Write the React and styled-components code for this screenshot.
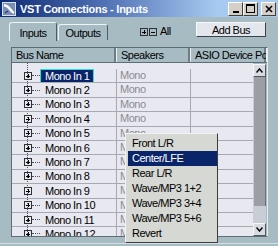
import styled, { createGlobalStyle } from 'styled-components';

const GlobalStyle = createGlobalStyle`
    html, body {
        margin: 0;
        padding: 0;
        background: #a7bbc3;
    }
    body {
        font-family: "Liberation Sans", Arial, sans-serif;
        font-size: 11px;
        letter-spacing: -0.5px;
        color: #000;
    }
`;

const Window = styled.div`
    position: relative;
    width: 278px;
    height: 246px;
    overflow: hidden;
    display: flex;
    flex-direction: column;
    background: #a7bbc3;
`;

const TitleBar = styled.div`
    height: 17px;
    display: flex;
    align-items: center;
    padding: 0 2px;
    background: linear-gradient(to right, #0c2a72 0%, #5576b8 40%, #a6caf0 78%, #a6caf0 100%);
`;

const Title = styled.span`
    margin-left: 4px;
    font-weight: bold;
    font-size: 11px;
    letter-spacing: -0.25px;
    color: #fff;
    white-space: nowrap;
`;

const CaptionButtons = styled.div`
    margin-left: auto;
    display: flex;
`;

const CaptionButton = styled.div`
    width: 15px;
    height: 14px;
    box-sizing: border-box;
    margin-left: ${({ $gap }) => $gap || 0}px;
    background: #d4d0c8;
    border: 1px solid;
    border-color: #fff #404040 #404040 #fff;
    display: flex;
    align-items: center;
    justify-content: center;
`;

const Toolbar = styled.div`
    height: 24px;
    display: flex;
    align-items: flex-end;
    padding: 0 0 0 9px;
    box-sizing: border-box;
`;

const Tab = styled.div`
    width: ${({ $w }) => $w}px;
    height: ${({ $active }) => ($active ? 19 : 16)}px;
    box-sizing: border-box;
    border: 1px solid;
    border-bottom: none;
    border-color: #eef4f6 #4e5c64 transparent #eef4f6;
    border-radius: 3px 3px 0 0;
    margin-right: ${({ $active }) => ($active ? 1 : 0)}px;
    margin-bottom: ${({ $active }) => ($active ? 0 : 1)}px;
    display: flex;
    align-items: center;
    justify-content: center;
    padding-top: 1px;
`;

const ExpandAll = styled.div`
    align-self: flex-start;
    margin: 10px 0 0 32px;
    display: flex;
    align-items: center;
    gap: 1px;
    height: 9px;
`;

const AllLabel = styled.span`
    margin-left: 2px;
    line-height: 9px;
`;

const AddBus = styled.div`
    align-self: flex-start;
    margin: 5px 12px 0 auto;
    width: 70px;
    height: 15px;
    box-sizing: border-box;
    background: #e4e6ee;
    border: 1px solid;
    border-color: #f8f8fc #404048 #404048 #f8f8fc;
    display: flex;
    align-items: center;
    justify-content: center;
`;

const Frame = styled.div`
    margin: 6px 10px 0 11px;
    height: 190px;
    box-sizing: border-box;
    border: 1px solid #5e6c74;
    border-right-color: #e4ecf0;
    display: flex;
    flex-direction: column;
`;

const Footer = styled.div`
    margin-top: 6px;
    border-top: 1px solid #d4e0e4;
    flex: 1;
`;

const HeaderRow = styled.div`
    height: 15px;
    box-sizing: border-box;
    display: grid;
    grid-template-columns: 105px 74px 1fr;
    border-bottom: 1px solid #5e6c74;
    background: #a7bbc3;
`;

const HeaderCell = styled.div`
    padding-left: 4px;
    line-height: 14px;
    white-space: nowrap;
    overflow: hidden;
    border-right: 1px solid #e8f0f2;
    box-shadow: inset -2px 0 0 #6e7c84;
`;

const Body = styled.div`
    flex: 1;
    display: flex;
    min-height: 0;
`;

const List = styled.div`
    width: 241px;
    padding-top: 6px;
    overflow: hidden;
    background-color: #e8e8f0;
    background-image: repeating-linear-gradient(to bottom, #505058 0 1px, transparent 1px 2px);
    background-size: 1px 100%;
    background-position: 15px 0;
    background-repeat: no-repeat;
`;

const Row = styled.div`
    height: 14.4px;
    box-sizing: border-box;
    display: grid;
    grid-template-columns: 105px 74px 1fr;
    border-bottom: 1px solid #a6a8b2;
`;

const NameCell = styled.div`
    display: flex;
    align-items: center;
    padding-left: 12px;
    border-right: 1px solid #a6a8b2;
    white-space: nowrap;
    overflow: hidden;
`;

const Connector = styled.span`
    width: 8px;
    height: 0;
    border-top: 1px dotted ${({ $hidden }) => ($hidden ? 'transparent' : '#505058')};
`;

const BusLabel = styled.span`
    padding: 0 4px;
    height: 14px;
    box-sizing: border-box;
    line-height: 12px;
    border: 1px solid ${({ $selected }) => ($selected ? '#22e4d4' : 'transparent')};
    background: ${({ $selected }) => ($selected ? '#0a246a' : 'transparent')};
    color: ${({ $selected }) => ($selected ? '#fff' : '#000')};
`;

const SpeakerCell = styled.div`
    padding-left: 3px;
    line-height: 13px;
    color: #8a8c94;
    border-right: 1px solid #a6a8b2;
`;

const Scrollbar = styled.div`
    width: 13px;
    display: flex;
    flex-direction: column;
    padding-top: 1px;
    background: #a7bbc3;
`;

const ScrollButton = styled.div`
    height: 13px;
    box-sizing: border-box;
    background: #d8dce2;
    border: 1px solid;
    border-color: #f4f6f8 #505860 #505860 #f4f6f8;
    display: flex;
    align-items: center;
    justify-content: center;
`;

const Thumb = styled.div`
    height: 129px;
    box-sizing: border-box;
    background: #9c9ea6;
    border-left: 1px solid #c8ccd2;
    border-right: 1px solid #6c7078;
`;

const Track = styled.div`
    flex: 1;
    background: #c9ced6;
`;

const Menu = styled.div`
    position: absolute;
    left: 125px;
    top: 133px;
    width: 93px;
    height: 110px;
    box-sizing: border-box;
    padding: 2px 0 1px 2px;
    background: #d6d8d4;
    border: 1px solid;
    border-color: #f2f2f0 #3c3c3c #3c3c3c #f2f2f0;
`;

const MenuItem = styled.div`
    height: 15px;
    padding-left: 4px;
    line-height: 15px;
    white-space: nowrap;
    background: ${({ $active }) => ($active ? '#0a246a' : 'transparent')};
    color: ${({ $active }) => ($active ? '#fff' : '#000')};
`;

const AppIcon = () => (
    <svg width="14" height="14" viewBox="0 0 14 14">
        <rect x="0" y="0" width="14" height="14" fill="#7890b8" />
        <rect x="0.5" y="0.5" width="13" height="13" fill="none" stroke="#d8e0f0" />
        <path d="M2 3 Q6 4 8 7 Q10 10 12 11" stroke="#fff" strokeWidth="2.4" fill="none" />
        <path d="M3 11 L6 9" stroke="#30406a" strokeWidth="1.5" />
    </svg>
);

const BoxIcon = ({ minus }) => (
    <svg width="8" height="8" viewBox="0 0 8 8" shapeRendering="crispEdges">
        <rect x="0.5" y="0.5" width="7" height="7" fill="none" stroke="#303038" />
        <path d="M2 4.5 H6" stroke="#000" />
        {!minus && <path d="M4.5 2 V6" stroke="#000" />}
    </svg>
);

const rows = Array.from({ length: 12 }, (_, i) => i + 1);
const menuItems = [
    'Front L/R',
    'Center/LFE',
    'Rear L/R',
    'Wave/MP3 1+2',
    'Wave/MP3 3+4',
    'Wave/MP3 5+6',
    'Revert'
];

const App = () => {
    return (
        <>
            <GlobalStyle />
            <Window>
                <TitleBar>
                    <AppIcon />
                    <Title>VST Connections - Inputs</Title>
                    <CaptionButtons>
                        <CaptionButton>
                            <svg width="8" height="8" viewBox="0 0 8 8">
                                <rect x="1" y="6" width="6" height="2" fill="#000" />
                            </svg>
                        </CaptionButton>
                        <CaptionButton>
                            <svg width="9" height="9" viewBox="0 0 9 9" shapeRendering="crispEdges">
                                <rect x="0.5" y="0.5" width="8" height="8" fill="none" stroke="#000" />
                                <rect x="0" y="0" width="9" height="2" fill="#000" />
                            </svg>
                        </CaptionButton>
                        <CaptionButton $gap={3}>
                            <svg width="8" height="8" viewBox="0 0 8 8">
                                <path d="M1 1 L7 7 M7 1 L1 7" stroke="#000" strokeWidth="1.6" />
                            </svg>
                        </CaptionButton>
                    </CaptionButtons>
                </TitleBar>

                <Toolbar>
                    <Tab $active $w={48}>Inputs</Tab>
                    <Tab $w={50}>Outputs</Tab>
                    <ExpandAll>
                        <BoxIcon />
                        <BoxIcon minus />
                        <AllLabel>All</AllLabel>
                    </ExpandAll>
                    <AddBus>Add Bus</AddBus>
                </Toolbar>

                <Frame>
                    <HeaderRow>
                        <HeaderCell>Bus Name</HeaderCell>
                        <HeaderCell>Speakers</HeaderCell>
                        <HeaderCell>ASIO Device Port</HeaderCell>
                    </HeaderRow>
                    <Body>
                        <List>
                            {rows.map((n) => (
                                <Row key={n}>
                                    <NameCell>
                                        <BoxIcon />
                                        <Connector $hidden={n === 9} />
                                        <BusLabel $selected={n === 1}>Mono In {n}</BusLabel>
                                    </NameCell>
                                    <SpeakerCell>Mono</SpeakerCell>
                                    <div />
                                </Row>
                            ))}
                        </List>
                        <Scrollbar>
                            <ScrollButton>
                                <svg width="7" height="5" viewBox="0 0 7 5">
                                    <path d="M0.5 4.5 L3.5 1 L6.5 4.5" stroke="#000" strokeWidth="1.4" fill="none" />
                                </svg>
                            </ScrollButton>
                            <Thumb />
                            <Track />
                            <ScrollButton>
                                <svg width="7" height="5" viewBox="0 0 7 5">
                                    <path d="M0.5 0.5 L3.5 4 L6.5 0.5" stroke="#000" strokeWidth="1.4" fill="none" />
                                </svg>
                            </ScrollButton>
                        </Scrollbar>
                    </Body>
                </Frame>
                <Footer />

                <Menu>
                    {menuItems.map((item) => (
                        <MenuItem key={item} $active={item === 'Center/LFE'}>
                            {item}
                        </MenuItem>
                    ))}
                </Menu>
            </Window>
        </>
    );
};

export default App;
